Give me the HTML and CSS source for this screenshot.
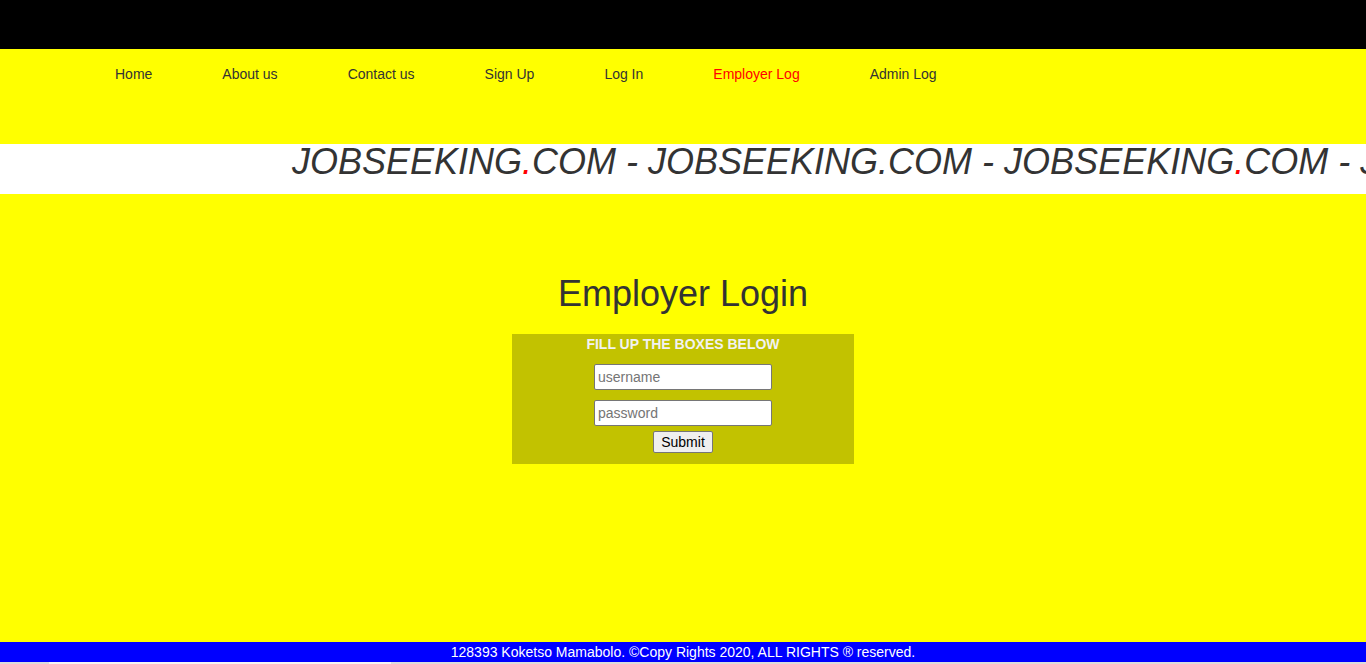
FILE: index.html
```html
<!DOCTYPE html>
<html>
<head>
<meta charset="utf-8">
<link rel="stylesheet" href="styles.css">
</head>
<body>
<div class="page">
  <div class="topbar"></div>
  <nav class="nav">
    <a class="nav-link" href="#">Home</a>
    <a class="nav-link" href="#">About us</a>
    <a class="nav-link" href="#">Contact us</a>
    <a class="nav-link" href="#">Sign Up</a>
    <a class="nav-link" href="#">Log In</a>
    <a class="nav-link active" href="#">Employer Log</a>
    <a class="nav-link" href="#">Admin Log</a>
  </nav>
  <div class="marquee">
    <div class="marquee-text">JOBSEEKING<span class="dot">.</span>COM - JOBSEEKING.COM - JOBSEEKING<span class="dot">.</span>COM - JOBSEEKING.COM - </div>
  </div>
  <main class="main">
    <h1 class="title">Employer Login</h1>
    <form class="login-box">
      <div class="box-title">FILL UP THE BOXES BELOW</div>
      <input class="field field-first" type="text" placeholder="username">
      <input class="field field-second" type="password" placeholder="password">
      <button class="submit" type="button">Submit</button>
    </form>
  </main>
  <footer class="footer">128393 Koketso Mamabolo. ©Copy Rights 2020, ALL RIGHTS ® reserved.</footer>
  <div class="scrollstrip"><div class="thumb"></div></div>
</div>
</body>
</html>
```
FILE: styles.css
```css
html, body {
  margin: 0;
  padding: 0;
  height: 100%;
  overflow: hidden;
}
body {
  font-family: "Liberation Sans", Arial, sans-serif;
  background: #ffff00;
}
.page {
  display: flex;
  flex-direction: column;
  height: 664px;
}
.topbar {
  height: 49px;
  background: #000;
  flex: none;
}
.nav {
  height: 95px;
  flex: none;
  background: #ffff00;
  display: flex;
  align-items: flex-start;
  gap: 70px;
  padding: 17px 0 0 115px;
  box-sizing: border-box;
}
.nav-link {
  font-size: 14px;
  line-height: 16px;
  color: #333;
  text-decoration: none;
}
.nav-link.active {
  color: #ff0000;
}
.marquee {
  height: 50px;
  flex: none;
  background: #fff;
  overflow-x: clip;
  overflow-y: visible;
  display: flex;
  align-items: flex-start;
}
.marquee-text {
  margin-top: -3px;
  padding-left: 292px;
  white-space: nowrap;
  font-size: 36px;
  line-height: 41px;
  font-style: italic;
  color: #333;
}
.dot {
  color: #ff0000;
}
.main {
  flex: 1;
  display: flex;
  flex-direction: column;
  align-items: center;
  padding-top: 79px;
}
.title {
  margin: 0;
  font-size: 36px;
  line-height: 41px;
  font-weight: normal;
  color: #333;
}
.login-box {
  margin-top: 20px;
  width: 342px;
  height: 130px;
  box-sizing: border-box;
  background: #c2c200;
  display: flex;
  flex-direction: column;
  align-items: center;
  padding-top: 2px;
}
.box-title {
  font-size: 14px;
  line-height: 16px;
  font-weight: bold;
  color: #f2f2f2;
}
.field {
  width: 178px;
  height: 26px;
  box-sizing: border-box;
  border: 1px solid #767676;
  border-radius: 2px;
  background: #fff;
  font-family: "Liberation Sans", Arial, sans-serif;
  font-size: 14px;
  padding: 1px 3px;
  margin: 0;
}
.field::placeholder {
  color: #757575;
}
.field-first {
  margin-top: 12px;
}
.field-second {
  margin-top: 10px;
}
.submit {
  margin-top: 5px;
  width: 60px;
  height: 22px;
  box-sizing: border-box;
  border: 1px solid #767676;
  border-radius: 2px;
  background: #efefef;
  font-family: "Liberation Sans", Arial, sans-serif;
  font-size: 14px;
  color: #000;
  padding: 0;
}
.footer {
  height: 20px;
  flex: none;
  background: #0000ff;
  color: #fff;
  font-size: 14px;
  line-height: 20px;
  text-align: center;
}
.scrollstrip {
  height: 2px;
  flex: none;
  background: #dcdcdc;
  padding-left: 49px;
}
.thumb {
  width: 342px;
  height: 2px;
  background: #f4f4f4;
}
```
